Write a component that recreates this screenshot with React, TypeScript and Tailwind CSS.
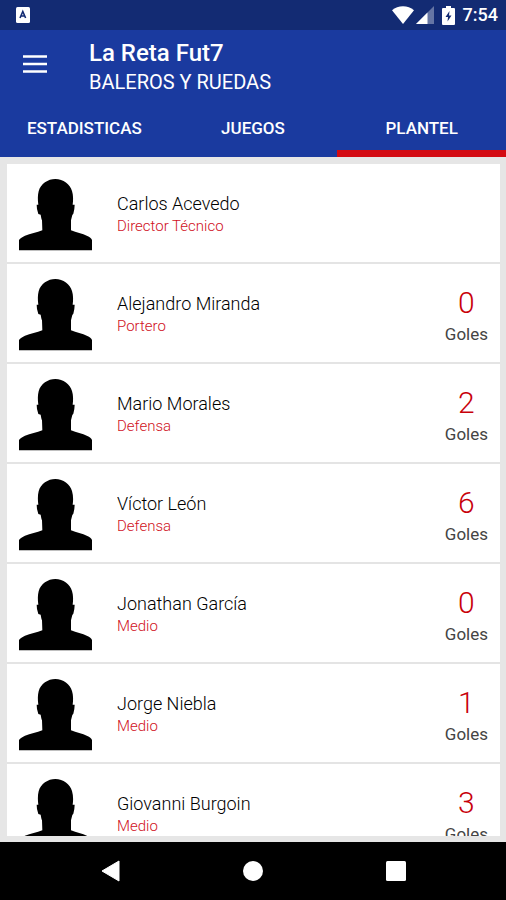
import React, { useState } from "react";

type Player = {
  name: string;
  position: string;
  goals?: number;
};

const tabs = ["ESTADISTICAS", "JUEGOS", "PLANTEL"];

const players: Player[] = [
  { name: "Carlos Acevedo", position: "Director Técnico" },
  { name: "Alejandro Miranda", position: "Portero", goals: 0 },
  { name: "Mario Morales", position: "Defensa", goals: 2 },
  { name: "Víctor León", position: "Defensa", goals: 6 },
  { name: "Jonathan García", position: "Medio", goals: 0 },
  { name: "Jorge Niebla", position: "Medio", goals: 1 },
  { name: "Giovanni Burgoin", position: "Medio", goals: 3 },
];

const StatusBar = () => (
  <div className="flex h-[30px] shrink-0 items-center bg-[#132b73] pr-2 pl-4 text-white">
    <svg width="14" height="16" viewBox="0 0 14 16" aria-hidden="true">
      <rect width="14" height="16" rx="1.5" fill="#fff" />
      <path
        d="M4 11 6.8 4.5 9.6 11M5 9h3.6"
        fill="none"
        stroke="#132b73"
        strokeWidth="1.6"
      />
    </svg>
    <div className="ml-auto flex items-center">
      <svg width="22" height="18" viewBox="0 0 22 18" aria-hidden="true">
        <path d="M0 4.2C6-1.2 16-1.2 22 4.2L11 18Z" fill="#fff" />
      </svg>
      <svg
        className="ml-0.5"
        width="18"
        height="18"
        viewBox="0 0 18 18"
        aria-hidden="true"
      >
        <path d="M18 0v18H0Z" fill="#fff" fillOpacity="0.35" />
        <path d="M11.5 6.5V18H0Z" fill="#fff" />
      </svg>
      <svg
        className="ml-2"
        width="13"
        height="19"
        viewBox="0 0 13 19"
        aria-hidden="true"
      >
        <path
          d="M4 0h5v2h3q1 0 1 1v15q0 1-1 1H1q-1 0-1-1V3q0-1 1-1h3Z"
          fill="#fff"
        />
        <path d="M7.500 5 3.500 11h2.500L5.500 15.500l4-6H7Z" fill="#132b73" />
      </svg>
      <span className="ml-2 text-lg leading-6 font-medium">7:54</span>
    </div>
  </div>
);

const Avatar = () => (
  <svg
    className="mt-[2px] shrink-0"
    width="74"
    height="72"
    viewBox="28 26 222 216"
    aria-hidden="true"
  >
    <path d="M28 240V209C32 203 38 200 46 196C62 190 82 186 98 180L97 150C95 146 94 139 93 133L86 131L82 116L81 103H86C84 88 84 74 87 63C93 40 115 26 137 26C161 26 181 41 187 62C191 75 191 89 189 103H195L194 116L191 130L188 134L184 150V180C200 186 218 190 233 197C240 200 245 204 247 209V240Z" />
  </svg>
);

const PlayerRow = ({ player }: { player: Player }) => (
  <li className="flex h-[100px] shrink-0 items-center border-b-2 border-[#e4e4e4] px-3 pt-[2px]">
    <Avatar />
    <div className="ml-6 min-w-0 flex-1">
      <p className="truncate text-lg leading-6 font-light text-black">
        {player.name}
      </p>
      <p className="truncate text-[15px] leading-5 font-light text-[#d0101c]">
        {player.position}
      </p>
    </div>
    {player.goals !== undefined && (
      <div className="mt-[2px] text-center">
        <p className="text-3xl leading-[38px] font-light text-[#c8000a]">
          {player.goals}
        </p>
        <p className="text-[17px] leading-6 text-[#444]">Goles</p>
      </div>
    )}
  </li>
);

const App = () => {
  const [active, setActive] = useState("PLANTEL");

  return (
    <div className="flex h-screen flex-col bg-[#e6e6e6] font-['Roboto',sans-serif]">
      <StatusBar />
      <header className="shrink-0 bg-[#1a3a9f] text-white">
        <div className="flex items-start px-[23px] pt-2">
          <button
            type="button"
            aria-label="Menú"
            className="mt-[17px] cursor-pointer"
          >
            <svg width="24" height="18" viewBox="0 0 24 18">
              <path
                d="M0 1.500h24M0 9h24M0 16.500h24"
                stroke="#fff"
                strokeWidth="2.600"
              />
            </svg>
          </button>
          <div className="ml-[42px]">
            <h1 className="text-2xl leading-[30px] font-medium">
              La Reta Fut7
            </h1>
            <p className="text-xl leading-7">BALEROS Y RUEDAS</p>
          </div>
        </div>
        <nav className="grid grid-cols-3">
          {tabs.map((tab) => (
            <button
              key={tab}
              type="button"
              onClick={() => setActive(tab)}
              className={
                tab === active
                  ? "h-[61px] cursor-pointer border-b-[7px] border-[#d30a12] pt-3 text-[17px] font-medium"
                  : "h-[61px] cursor-pointer border-b-[7px] border-transparent pt-3 text-[17px] font-medium"
              }
            >
              {tab}
            </button>
          ))}
        </nav>
      </header>
      <main className="flex min-h-0 flex-1 flex-col pt-[7px] pr-[6px] pb-[6px] pl-[7px]">
        <ul className="min-h-0 flex-1 overflow-hidden bg-white">
          {players.map((player) => (
            <PlayerRow key={player.name} player={player} />
          ))}
        </ul>
      </main>
      <footer className="grid h-[58px] shrink-0 grid-cols-[1fr_20px_1fr] items-center bg-black px-[100px]">
        <button type="button" aria-label="Atrás" className="w-5 cursor-pointer">
          <svg width="20" height="22" viewBox="0 0 20 22">
            <path d="M19 1v20L2 11Z" fill="#fff" stroke="#fff" />
          </svg>
        </button>
        <button type="button" aria-label="Inicio" className="cursor-pointer">
          <svg width="20" height="22" viewBox="0 0 20 22">
            <circle cx="10" cy="11" r="10" fill="#fff" />
          </svg>
        </button>
        <button
          type="button"
          aria-label="Recientes"
          className="w-5 cursor-pointer justify-self-end"
        >
          <svg width="20" height="22" viewBox="0 0 20 22">
            <rect y="1" width="20" height="20" rx="1.500" fill="#fff" />
          </svg>
        </button>
      </footer>
    </div>
  );
};

export default App;
